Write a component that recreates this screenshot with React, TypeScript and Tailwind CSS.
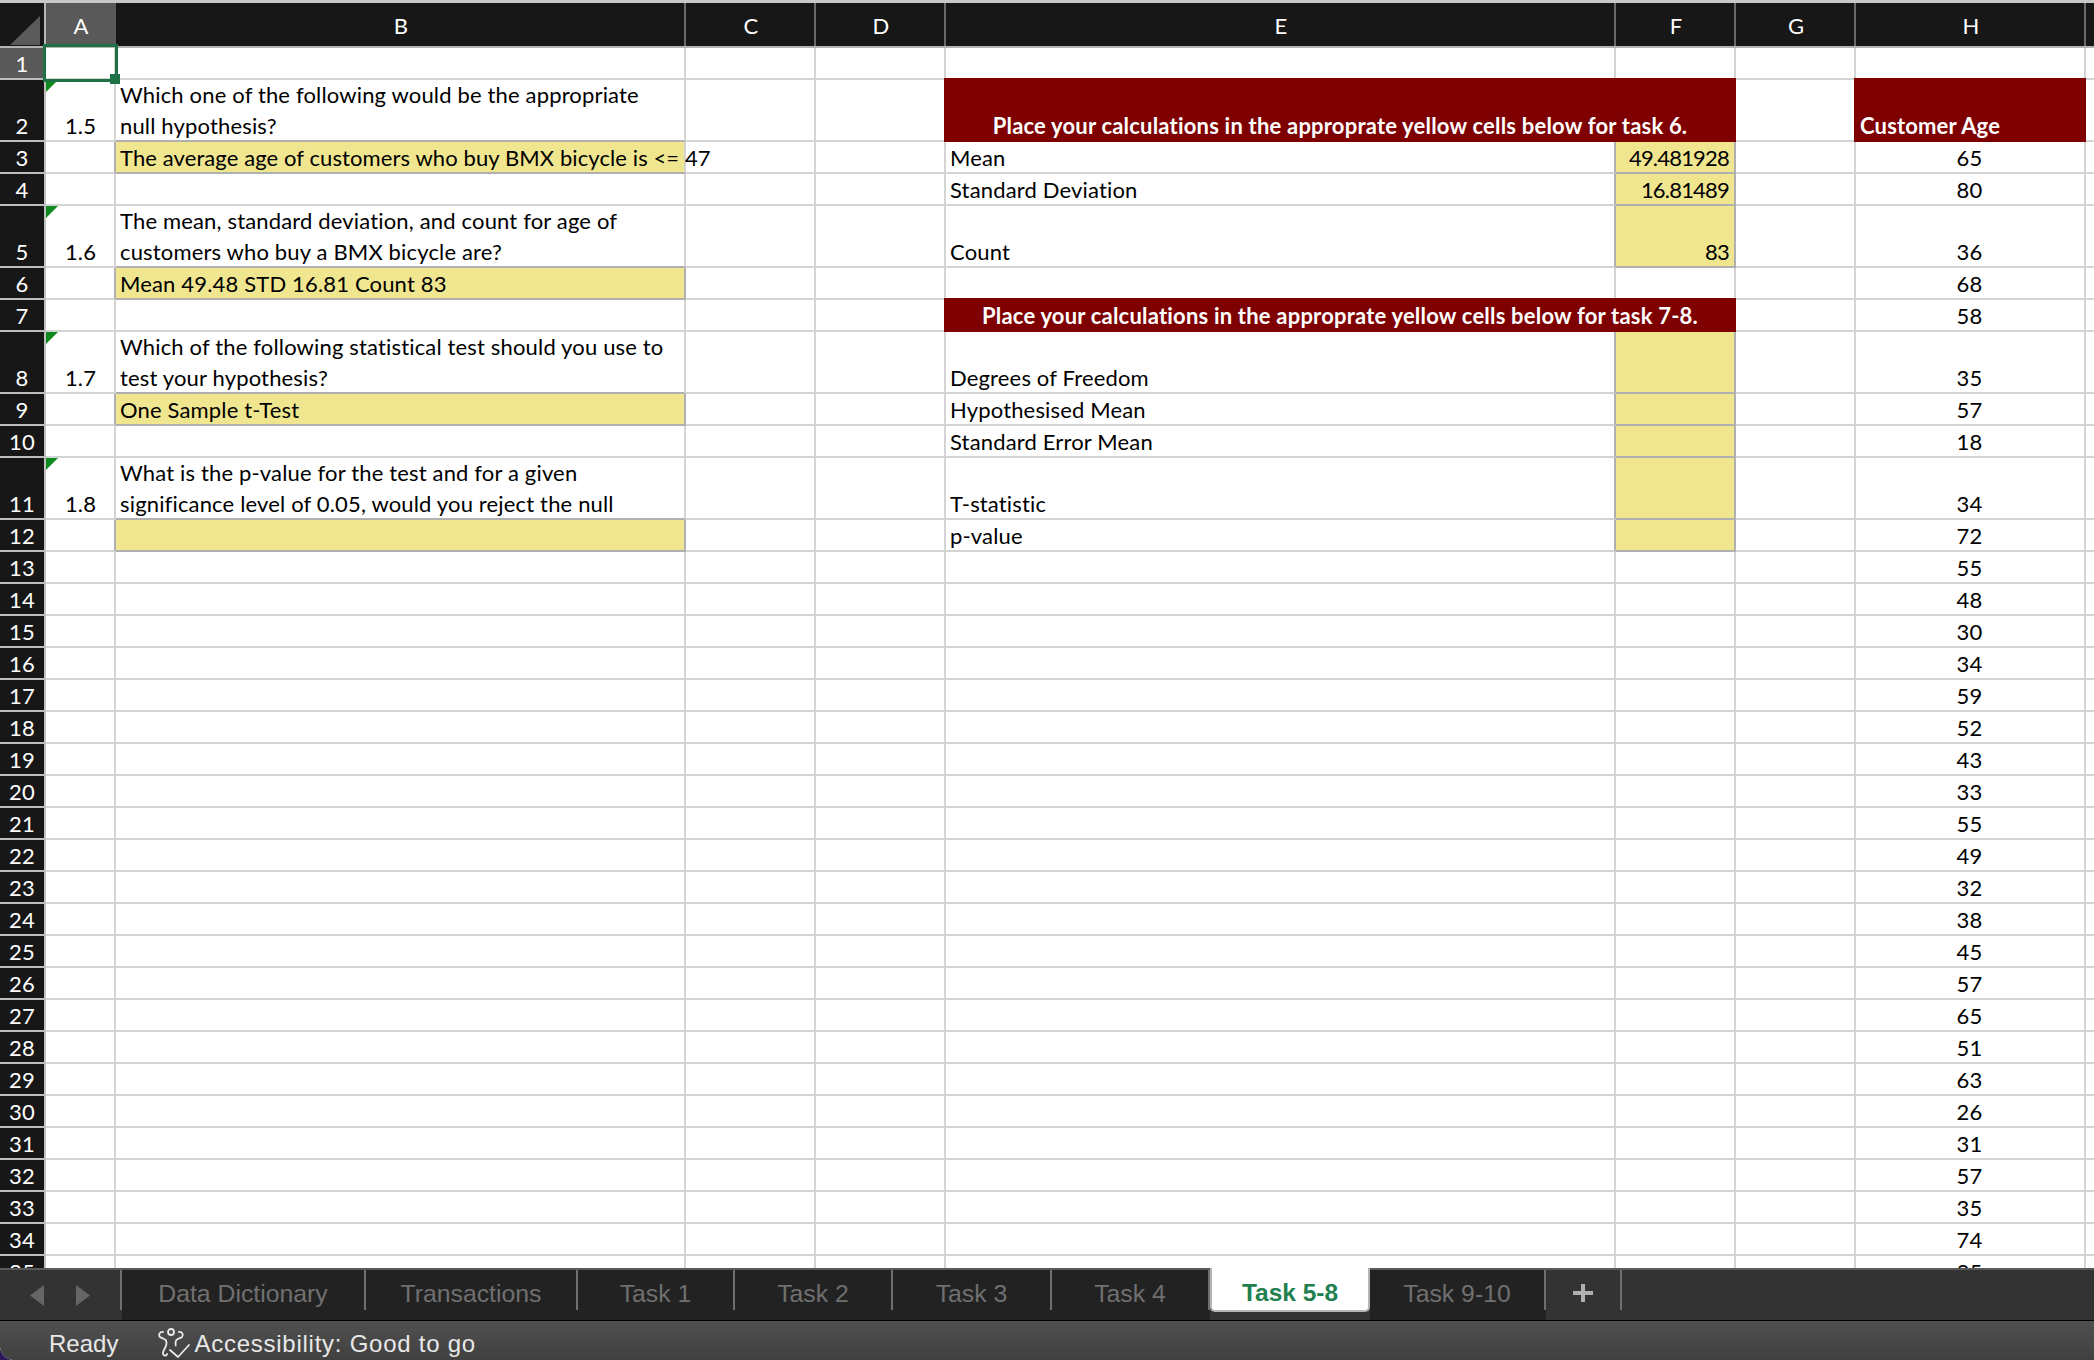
import React from "react";

const colWidths = [70, 570, 130, 130, 670, 120, 120, 230];
const colLetters = ["A", "B", "C", "D", "E", "F", "G", "H"];
const rowHeights = [32, 61.6, 32, 32, 62, 32, 32, 62, 32, 32, 62, 32];
const ages = [65, 80, 36, 68, 58, 35, 57, 18, 34, 72, 55, 48, 30, 34, 59, 52, 43, 33, 55, 49, 32, 38, 45, 57, 65, 51, 63, 26, 31, 57, 35, 74, 35];

const yellow = "bg-[#f0e68f] border-b-[#b0b0b0] border-r-[#b0b0b0]";
const wrap = "whitespace-pre-line leading-[31px] border-b-[#b0b0b0]";
const rightDark = "border-r-[#b0b0b0]";
const num = " justify-end tracking-[-0.8px]";

type CellMap = Record<string, { t?: string; cls?: string; tri?: boolean; wrapped?: boolean }>;
const cells: CellMap = {
  "2A": { t: "1.5", cls: "justify-center pl-[6px]", tri: true },
  "2B": { t: "Which one of the following would be the appropriate\nnull hypothesis?", cls: wrap, wrapped: true },
  "3A": { cls: rightDark },
  "3B": { t: "The average age of customers who buy BMX bicycle is <= 47", cls: "bg-[#f0e68f] border-b-[#b0b0b0] border-r-0 tracking-[0.1px]" },
  "5A": { t: "1.6", cls: "justify-center pl-[6px]", tri: true },
  "5B": { t: "The mean, standard deviation, and count for age of\ncustomers who buy a BMX bicycle are?", cls: wrap, wrapped: true },
  "6A": { cls: rightDark },
  "6B": { t: "Mean 49.48 STD 16.81 Count 83", cls: yellow },
  "8A": { t: "1.7", cls: "justify-center pl-[6px]", tri: true },
  "8B": { t: "Which of the following statistical test should you use to\ntest your hypothesis?", cls: wrap, wrapped: true },
  "9A": { cls: rightDark },
  "9B": { t: "One Sample t-Test", cls: yellow },
  "11A": { t: "1.8", cls: "justify-center pl-[6px]", tri: true },
  "11B": { t: "What is the p-value for the test and for a given\nsignificance level of 0.05, would you reject the null", cls: wrap, wrapped: true },
  "12A": { cls: rightDark },
  "12B": { cls: yellow },
  "3E": { t: "Mean", cls: rightDark },
  "4E": { t: "Standard Deviation", cls: rightDark },
  "5E": { t: "Count", cls: rightDark },
  "8E": { t: "Degrees of Freedom", cls: rightDark },
  "9E": { t: "Hypothesised Mean", cls: rightDark },
  "10E": { t: "Standard Error Mean", cls: rightDark },
  "11E": { t: "T-statistic", cls: rightDark },
  "12E": { t: "p-value", cls: rightDark },
  "3F": { t: "49.481928", cls: yellow + num },
  "4F": { t: "16.81489", cls: yellow + num },
  "5F": { t: "83", cls: yellow + num },
  "8F": { cls: yellow },
  "9F": { cls: yellow },
  "10F": { cls: yellow },
  "11F": { cls: yellow },
  "12F": { cls: yellow },
};

const tabs = [
  { n: "Data Dictionary", w: 244 },
  { n: "Transactions", w: 212 },
  { n: "Task 1", w: 157 },
  { n: "Task 2", w: 158 },
  { n: "Task 3", w: 159 },
  { n: "Task 4", w: 158 },
];

function Cell({ r, c }: { r: number; c: string }) {
  const key = `${r}${c}`;
  const d = cells[key];
  let t = d?.t;
  let cls = d?.cls ?? "";
  if (c === "H" && r > 2) {
    t = String(ages[r - 3]);
    cls = "justify-center";
  }
  return (
    <div
      className={`relative flex items-end whitespace-nowrap border-b-2 border-r-2 border-[#d4d4d4] pl-[4px] pr-[5px] leading-[28px] ${cls}`}
    >
      {d?.tri && (
        <svg className="absolute left-0 top-0" width="12" height="12" viewBox="0 0 12 12">
          <polygon points="0,0 12,0 0,12" fill="#0f8a1f" />
        </svg>
      )}
      {t && <span className={d?.wrapped ? "-mb-[1px] block" : "block"}>{t}</span>}
    </div>
  );
}

const redBand =
  "relative col-span-2 -ml-[2px] -mt-[2px] flex items-end justify-center bg-[#7f0000] pb-[1px] font-bold leading-[30px] tracking-[0.2px] text-white";

export default function App() {
  const rows: number[] = [];
  for (let i = 1; i <= 35; i++) rows.push(i);
  return (
    <div className="h-[1360px] w-[2094px] bg-[#2b1a57]">
      <div className="flex h-[1360px] w-[2094px] flex-col overflow-hidden rounded-bl-[14px] bg-white font-['Lato',sans-serif] text-[22px] tracking-[0.16px] text-black">
        <div className="h-[3px] bg-[#c8c8c8]" />
        <div className="flex h-[45px] border-b-2 border-[#b4b4b4] bg-[#171717] text-white">
          <div className="flex w-[46px] items-end justify-end border-r-2 border-[#b8b8b8] pb-[1px] pr-[4px]">
            <svg width="30" height="29" viewBox="0 0 30 29">
              <polygon points="30,0 30,29 0,29" fill="#5a5a5a" />
            </svg>
          </div>
          {colLetters.map((l, i) => (
            <div
              key={l}
              style={{ width: colWidths[i] }}
              className={`flex items-center justify-center border-r-2 pl-[2px] pt-[1px] ${l === "A" ? "border-[#595959] bg-[#595959]" : "border-[#6a6a6a]"}`}
            >
              {l}
            </div>
          ))}
        </div>
        <div className="relative -mt-[4px] flex h-[1224px] overflow-hidden pt-[4px]">
          <div className="w-[46px] shrink-0 border-r-2 border-[#c0c0c0] bg-[#171717] text-white">
            {rows.map((r) => (
              <div
                key={r}
                style={{ height: r <= 12 ? rowHeights[r - 1] : 32 }}
                className={`flex items-end justify-center border-b-2 border-[#bdbdbd] leading-[28px] ${r === 1 ? "bg-[#595959]" : ""}`}
              >
                {r}
              </div>
            ))}
          </div>
          <div
            className="relative grid flex-1 grid-cols-[70px_570px_130px_130px_670px_120px_120px_230px_8px]"
            style={{ gridTemplateRows: rows.map((r) => (r <= 12 ? rowHeights[r - 1] : 32) + "px").join(" ") }}
          >
            {rows.map((r) =>
              ["A", "B", "C", "D", "E", "F", "G", "H", "I"].map((c) => {
                if ((r === 2 || r === 7) && c === "F") return null;
                if ((r === 2 || r === 7) && c === "E") {
                  return (
                    <div key={r + c} className={redBand}>
                      {r === 2
                        ? "Place your calculations in the approprate yellow cells below for task 6."
                        : "Place your calculations in the approprate yellow cells below for task 7-8."}
                    </div>
                  );
                }
                if (r === 2 && c === "H") {
                  return (
                    <div
                      key={r + c}
                      className="relative -ml-[2px] -mt-[2px] flex items-end bg-[#7f0000] pb-[1px] pl-[6px] font-bold leading-[30px] text-white"
                    >
                      Customer Age
                    </div>
                  );
                }
                return <Cell key={r + c} r={r} c={c} />;
              })
            )}
            <div className="absolute left-[-3px] top-[-4px] h-[38px] w-[75px] border-[3px] border-[#1e7145]" />
            <div className="absolute left-[64px] top-[26px] h-[10px] w-[10px] bg-[#1e7145]" />
          </div>
        </div>
        <div className="flex h-[53px] shrink-0 items-stretch border-b border-t-2 border-b-black border-t-[#5a5a5a] bg-[#333333] font-['Liberation_Sans',sans-serif] text-[24.8px] tracking-normal text-[#707070]">
          <div className="flex h-[40px] w-[122px] items-center justify-center gap-[32px] border-r-2 border-[#6f6f6f] pt-[11px]">
            <svg width="14" height="21" viewBox="0 0 14 21"><polygon points="14,0 14,21 0,10.5" fill="#666666" /></svg>
            <svg width="14" height="21" viewBox="0 0 14 21"><polygon points="0,0 0,21 14,10.5" fill="#666666" /></svg>
          </div>
          {tabs.map((t) => (
            <div key={t.n} style={{ width: t.w }} className="h-full bg-[#222222]">
              <div className="flex h-[40px] items-center justify-center border-r-2 border-[#6f6f6f] pt-[7px]">{t.n}</div>
            </div>
          ))}
          <div className="h-full w-[160px] bg-[#333333]">
            <div className="-mt-[2px] flex h-[44px] items-center justify-center rounded-b-[5px] border-x-2 border-b-2 border-[#b5b5b5] bg-white pt-[9px] text-[24.5px] font-bold text-[#22804f]">
              Task 5-8
            </div>
          </div>
          <div className="h-full w-[176px] bg-[#222222]">
            <div className="flex h-[40px] items-center justify-center border-r-2 border-[#6f6f6f] pt-[7px]">Task 9-10</div>
          </div>
          <div className="flex h-[40px] w-[76px] items-center justify-center border-r-2 border-[#6f6f6f] pt-[5px]">
            <svg width="20" height="20" viewBox="0 0 20 20"><path d="M10 1v18M0 10h20" stroke="#b0b0b0" strokeWidth="4" /></svg>
          </div>
        </div>
        <div className="flex h-[39px] shrink-0 items-center bg-gradient-to-b from-[#505050] to-[#404040] font-['Liberation_Sans',sans-serif] text-[24px] tracking-normal text-[#e8e8e8]">
          <span className="ml-[49px] mt-[6px]">Ready</span>
          <svg className="ml-[40px] mt-[5px]" width="32" height="30" viewBox="0 0 32 30" fill="none" stroke="#e8e8e8" strokeWidth="1.8" strokeLinecap="round" strokeLinejoin="round">
            <circle cx="13" cy="4" r="3" />
            <path d="M5 4C2 3.500 0 7 2 9c2 1.500 5 1.500 6 3.500 1 2.500 .5 4.500-.5 6.500-1 2-2.500 4-2.500 6 0 3 3.500 3.500 4 1" />
            <path d="M21 4c3-.5 5 3 3 5-2 1.500-5 1.500-6 3.500-.6 1.500-.5 3-.3 5" />
            <path d="M12 22l8 7 11-12" />
          </svg>
          <span className="ml-[4px] mt-[6px] tracking-[0.75px]">Accessibility: Good to go</span>
        </div>
      </div>
    </div>
  );
}
